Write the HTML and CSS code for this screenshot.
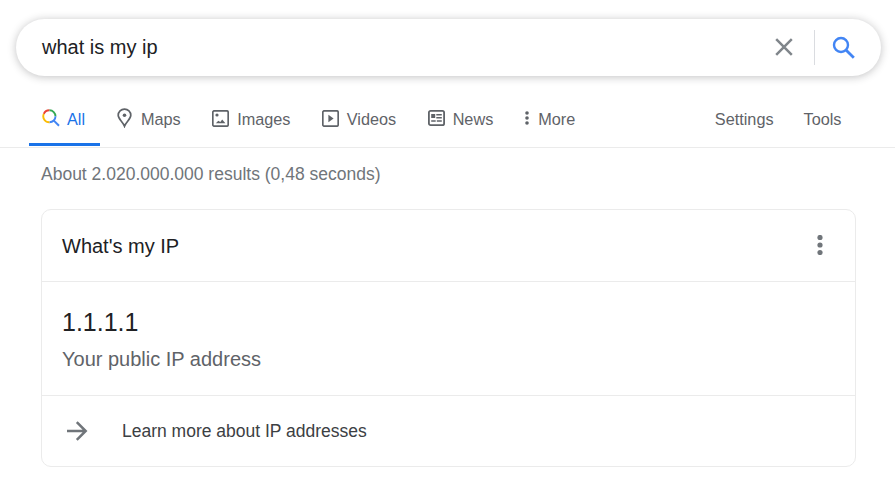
FILE: index.html
```html
<!DOCTYPE html>
<html lang="en">
<head>
<meta charset="utf-8">
<title>what is my ip</title>
<link rel="stylesheet" href="styles.css">
</head>
<body>
<header class="search">
  <span class="query">what is my ip</span>
  <svg class="clear" width="18" height="18" viewBox="0 0 18 18"><path d="M1.2 1.2l15.6 15.6M16.8 1.2L1.2 16.8" stroke="#80868b" stroke-width="2.5" fill="none"/></svg>
  <span class="separator"></span>
  <svg class="glass" width="24" height="24" viewBox="0 0 24 24" fill="none" stroke="#4285f4"><circle cx="9" cy="9" r="7" stroke-width="2.4"/><path d="M14 14l7.8 7.8" stroke-width="2.8"/></svg>
</header>
<nav class="tabs">
  <a class="tab active">
    <svg width="18" height="18" viewBox="0 0 18 18" fill="none" stroke-width="1.9"><path d="M1.8 4.9A6 6 0 0 1 7.5 1.3" stroke="#ea4335"/><path d="M7.5 1.3A6 6 0 0 1 13.5 7.3" stroke="#34a853"/><path d="M13.5 7.3A6 6 0 0 1 7.5 13.3" stroke="#4285f4"/><path d="M7.5 13.3A6 6 0 0 1 1.8 4.9" stroke="#fbbc04"/><path d="M11.6 11.4l5.4 5.4" stroke="#4285f4" stroke-width="2"/></svg>
    <span>All</span>
  </a>
  <a class="tab maps">
    <svg width="15" height="20" viewBox="0 0 15 20"><path d="M7.5 1.1A6.2 6.2 0 0 0 1.2 7.3C1.2 11.1 5.8 13.6 7.5 18.2C9.2 13.6 13.8 11.1 13.8 7.3A6.2 6.2 0 0 0 7.5 1.1Z" fill="none" stroke="#5f6368" stroke-width="1.7"/><circle cx="7.5" cy="7.2" r="1.8" fill="#5f6368"/></svg>
    <span>Maps</span>
  </a>
  <a class="tab images">
    <svg width="17" height="17" viewBox="0 0 17 17"><rect x=".8" y=".8" width="15.4" height="15.4" rx="1.5" fill="none" stroke="#5f6368" stroke-width="1.7"/><circle cx="5" cy="5" r="1.6" fill="#5f6368"/><path d="M3.8 13.2l2.5-2.5 2 1.2L10.2 9.6l3.2 3.6z" fill="#5f6368"/></svg>
    <span>Images</span>
  </a>
  <a class="tab videos">
    <svg width="17" height="17" viewBox="0 0 17 17"><rect x=".8" y=".8" width="15.4" height="15.4" rx="1.5" fill="none" stroke="#5f6368" stroke-width="1.7"/><path d="M6.4 4.7v7.6l5.2-3.8z" fill="#5f6368"/></svg>
    <span>Videos</span>
  </a>
  <a class="tab news">
    <svg width="17" height="16" viewBox="0 0 17 16"><rect x=".9" y=".9" width="15.2" height="14.2" rx="1.7" fill="none" stroke="#5f6368" stroke-width="1.8"/><path d="M3.2 4h4v4h-4z" fill="#5f6368"/><path d="M8.3 4.7h5.5M8.3 7.7h5.5M3.2 11.1h4.5M8.8 11.1h5" stroke="#5f6368" stroke-width="1.5"/></svg>
    <span>News</span>
  </a>
  <a class="tab more">
    <svg width="4" height="14" viewBox="0 0 4 14" fill="#5f6368"><circle cx="2" cy="2" r="1.8"/><circle cx="2" cy="7" r="1.8"/><circle cx="2" cy="12" r="1.8"/></svg>
    <span>More</span>
  </a>
  <a class="tab settings">Settings</a>
  <a class="tab tools">Tools</a>
</nav>
<main>
  <p class="stats">About 2.020.000.000 results (0,48 seconds)</p>
  <section class="card">
    <div class="card-head">
      <h2>What's my IP</h2>
      <svg width="6" height="20" viewBox="0 0 6 20" fill="#70757a"><circle cx="3" cy="2.5" r="2.6"/><circle cx="3" cy="10" r="2.6"/><circle cx="3" cy="17.5" r="2.6"/></svg>
    </div>
    <div class="answer">
      <div class="ip">1.1.1.1</div>
      <div class="caption">Your public IP address</div>
    </div>
    <a class="learn">
      <svg width="21" height="20" viewBox="0 0 21 20" fill="none" stroke="#70757a" stroke-width="2.5"><path d="M0 10h18.5M9.8 1.1L18.7 10l-8.9 8.9"/></svg>
      <span>Learn more about IP addresses</span>
    </a>
  </section>
</main>
</body>
</html>
```
FILE: styles.css
```css
* {
  box-sizing: border-box;
}

body {
  margin: 0;
  overflow: hidden;
  background: #fff;
  color: #202124;
  font-family: "Liberation Sans", Arial, sans-serif;
}

svg {
  display: block;
  flex: none;
}

.search {
  display: flex;
  align-items: center;
  height: 57px;
  margin: 19px 14px 0 16px;
  padding: 0 25px 1px 26px;
  border-radius: 29px;
  box-shadow: 0 1px 8px rgba(32, 33, 36, .28);
}

.query {
  flex: 1;
  font-size: 20px;
  line-height: 24px;
}

.separator {
  width: 1px;
  height: 35px;
  margin: 1px 17px 0 21px;
  background: #dadce0;
}

.glass {
  margin-top: 2px;
}

.tabs {
  display: flex;
  height: 72px;
  padding: 14px 53.5px 0 29px;
  border-bottom: 1px solid #ebebeb;
  color: #5f6368;
  font-size: 16.25px;
  white-space: nowrap;
}

.tab {
  display: flex;
  align-items: center;
  gap: 8px;
  height: 56px;
  padding-top: 2px;
}

.tab svg {
  margin-bottom: 2px;
}

.tab span {
  padding-top: 1px;
}

.active {
  gap: 7px;
  width: 71px;
  padding: 5px 0 0 13px;
  border-bottom: 3px solid #1a73e8;
  color: #1a73e8;
}

.maps {
  gap: 9px;
  margin-left: 17px;
}

.images,
.videos,
.news {
  margin-left: 31.4px;
}

.more {
  gap: 9px;
  margin-left: 32px;
}

.settings {
  margin-left: auto;
}

.tools {
  margin-left: 30px;
}

main {
  padding: 0 39px 0 41px;
}

.stats {
  margin: 16px 0 25px;
  color: #70757a;
  font-size: 17.5px;
  line-height: 20px;
}

.card {
  height: 258px;
  border: 1px solid #ebebeb;
  border-radius: 10px;
}

.card-head {
  display: flex;
  align-items: center;
  justify-content: space-between;
  height: 72px;
  padding: 0 32px 0 20px;
  border-bottom: 1px solid #ebebeb;
}

.card-head svg {
  margin-bottom: 1px;
}

h2 {
  margin: 2px 0 0;
  font-size: 20px;
  font-weight: 400;
  line-height: 23px;
}

.answer {
  height: 114px;
  padding: 24px 20px 0;
  border-bottom: 1px solid #ebebeb;
}

.ip {
  font-size: 25px;
  line-height: 32px;
}

.caption {
  margin-top: 9px;
  color: #5f6368;
  font-size: 20px;
  line-height: 24px;
}

.learn {
  display: flex;
  align-items: center;
  gap: 34px;
  height: 70px;
  padding-left: 25px;
  color: #3c4043;
  font-size: 17.5px;
}
```
